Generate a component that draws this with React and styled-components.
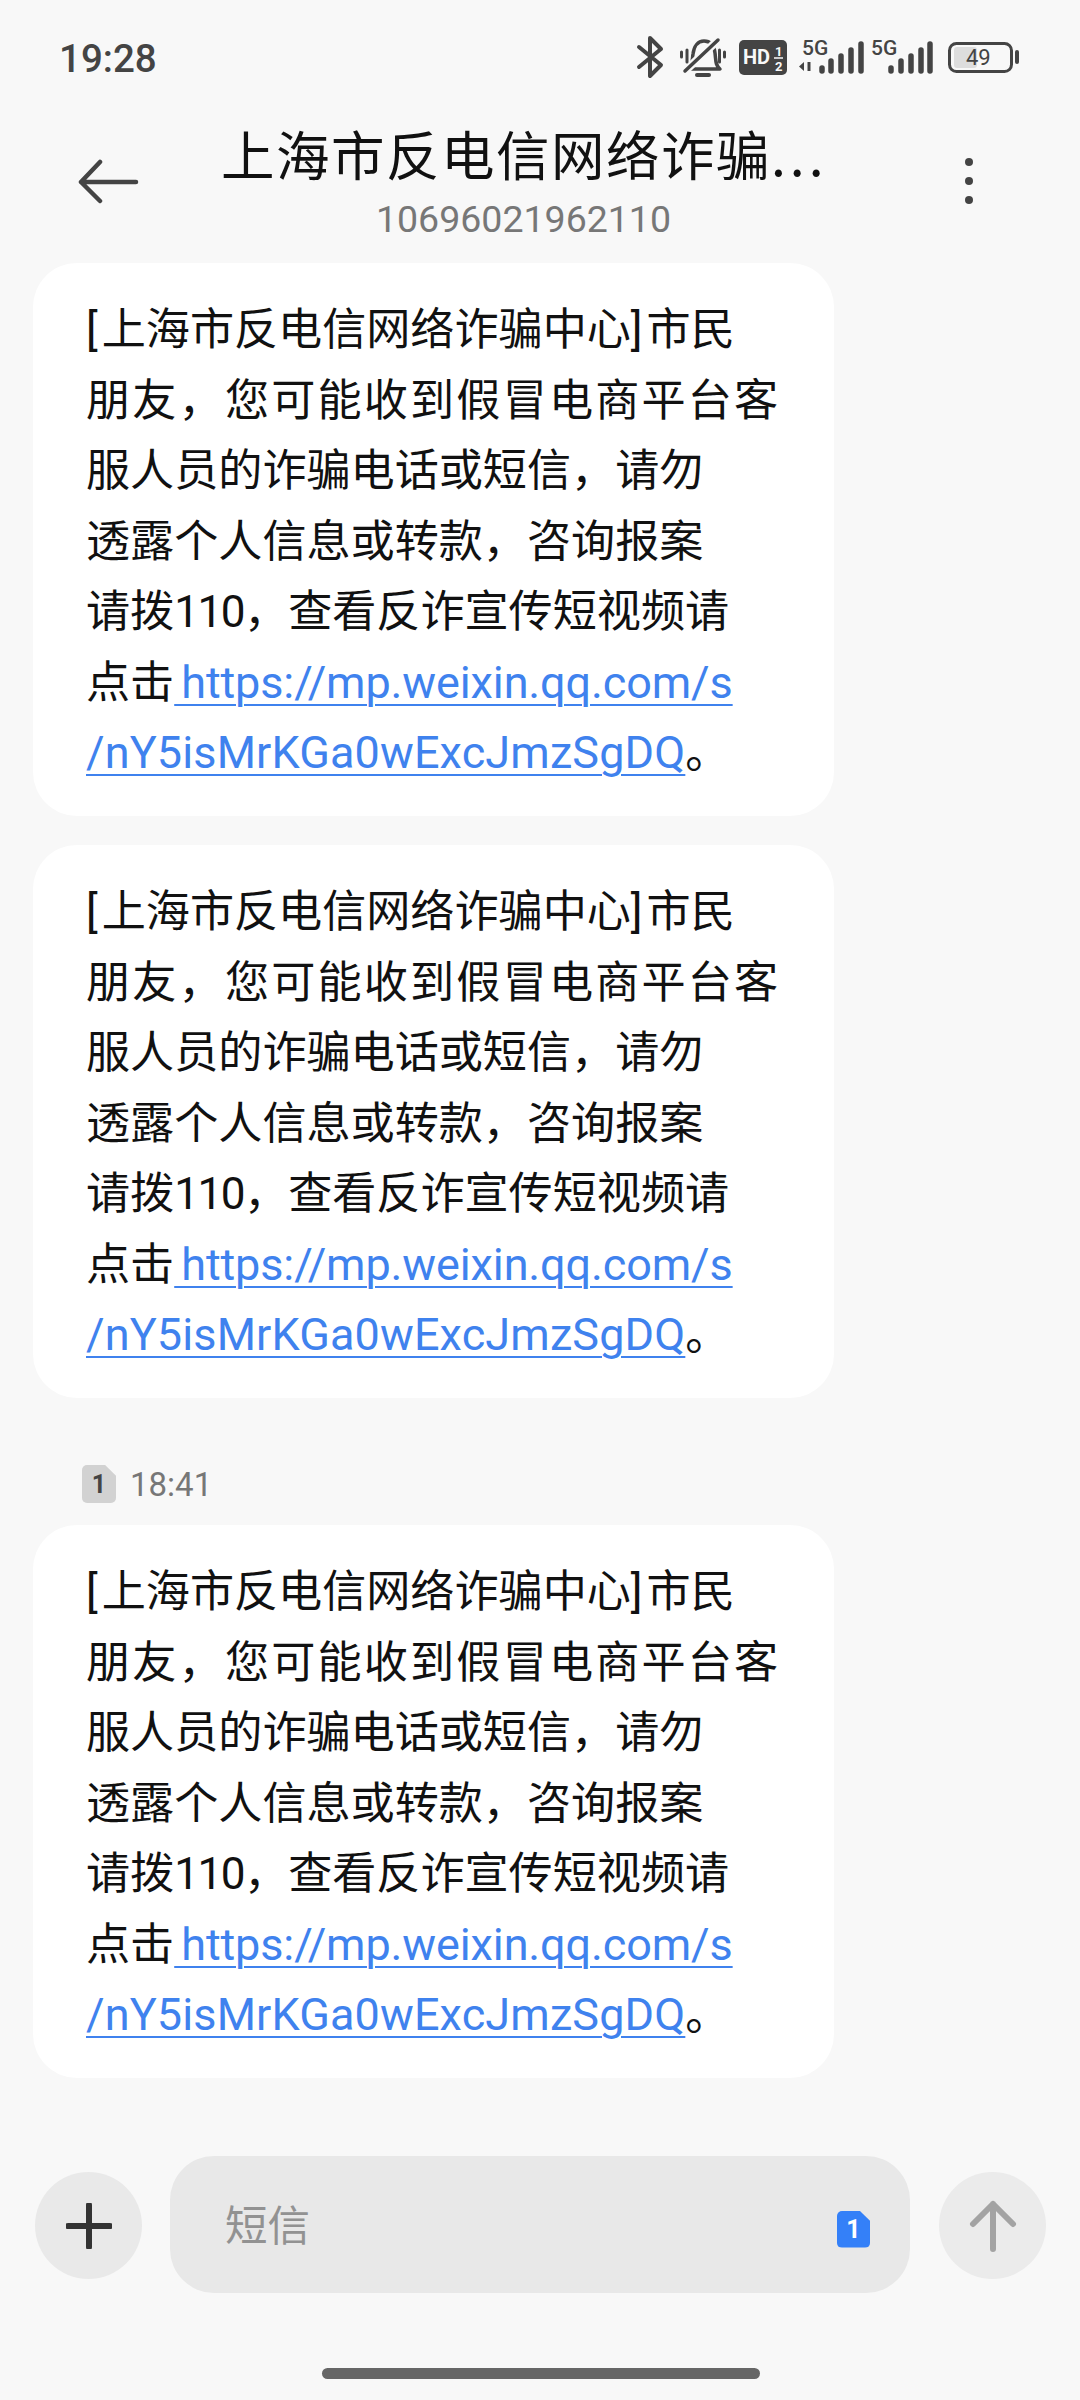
import React from 'react';
import styled, { createGlobalStyle } from 'styled-components';

const Global = createGlobalStyle`
  html, body {
    margin: 0;
    padding: 0;
    background: #f8f8f8;
  }
`;

const Page = styled.div`
  width: 1080px;
  height: 2400px;
  display: flex;
  flex-direction: column;
  overflow: hidden;
  background: #f8f8f8;
  font-family: Roboto, "Noto Sans CJK SC", sans-serif;
`;

const StatusBar = styled.div`
  height: 116px;
  flex: none;
  display: flex;
  align-items: center;
  justify-content: space-between;
  box-sizing: border-box;
  padding: 0 55px 0 59px;
`;

const Clock = styled.span`
  font-size: 38.5px;
  font-weight: 500;
  color: #444;
`;

const StatusIcons = styled.div`
  display: flex;
  align-items: center;
`;

const Header = styled.div`
  height: 131px;
  flex: none;
  display: flex;
  align-items: flex-start;
`;

const BackButton = styled.div`
  width: 221px;
  flex: none;
  padding: 43px 0 0 78px;
  box-sizing: border-box;
  line-height: 0;
`;

const Titles = styled.div`
  width: 697px;
  flex: none;
  display: flex;
  flex-direction: column;
`;

const Title = styled.div`
  font-family: "Noto Sans CJK SC", sans-serif;
  font-size: 53.5px;
  letter-spacing: 1.5px;
  line-height: 74px;
  color: #111;
  white-space: nowrap;
`;

const Ellipsis = styled.span`
  letter-spacing: 4px;
`;

const Subtitle = styled.div`
  width: 605px;
  text-align: center;
  font-size: 37.5px;
  line-height: 46px;
  margin-top: 6px;
  color: #777;
`;

const Dots = styled.div`
  display: flex;
  flex-direction: column;
  gap: 11px;
  padding: 42px 0 0 47px;
`;

const Dot = styled.span`
  width: 8px;
  height: 8px;
  border-radius: 50%;
  background: #444;
`;

const Messages = styled.div`
  flex: 1;
  display: flex;
  flex-direction: column;
  padding: 16px 0 0 33px;
`;

const Bubble = styled.div`
  width: 801px;
  height: 553px;
  box-sizing: border-box;
  padding: 32px 0 0 53px;
  margin-bottom: 29px;
  background: #fff;
  border-radius: 44px;
  font-family: Roboto, "Noto Sans CJK SC", sans-serif;
  font-size: 44.1px;
  line-height: 70.5px;
  color: #111;
  white-space: nowrap;
`;

const Line = styled.div`
  height: 70.5px;
  letter-spacing: ${p => p.$spread || 0}px;
`;

const Bracket = styled.span`
  letter-spacing: 4px;
`;

const Digits = styled.span`
  letter-spacing: -1.5px;
`;

const Url = styled.a`
  color: #3f82ee;
  font-size: 45px;
  letter-spacing: ${p => p.$track}px;
  word-spacing: -4px;
  text-decoration: underline;
  text-underline-offset: 6px;
  text-decoration-thickness: 2px;
`;

const DateRow = styled.div`
  display: flex;
  align-items: center;
  gap: 14px;
  padding-left: 49px;
  margin: 38px 0 22px;
  height: 38px;
`;

const DateText = styled.span`
  font-size: 33px;
  color: #777;
`;

const SimBadge = styled.span`
  width: ${p => p.$w}px;
  height: ${p => p.$h}px;
  display: flex;
  align-items: center;
  justify-content: center;
  border-radius: 5px;
  font-size: ${p => p.$size}px;
  font-weight: 700;
  color: ${p => p.$fg};
  background: ${p => p.$bg};
  clip-path: polygon(0 0, 68% 0, 100% 28%, 100% 100%, 0 100%);
`;

const InputBadge = styled(SimBadge)`
  margin-top: 9px;
`;

const Composer = styled.div`
  flex: none;
  height: 244px;
  display: flex;
  align-items: flex-start;
  padding-left: 35px;
  box-sizing: border-box;
  position: relative;
`;

const RoundButton = styled.div`
  width: 107px;
  height: 107px;
  flex: none;
  margin-top: 16px;
  border-radius: 50%;
  background: ${p => p.$bg};
  display: flex;
  align-items: center;
  justify-content: center;
`;

const InputBox = styled.div`
  width: 740px;
  height: 137px;
  flex: none;
  margin: 0 29px 0 28px;
  padding: 0 40px 0 55px;
  box-sizing: border-box;
  border-radius: 44px;
  background: #e8e8e8;
  display: flex;
  align-items: center;
  justify-content: space-between;
`;

const Placeholder = styled.span`
  font-family: "Noto Sans CJK SC", sans-serif;
  font-size: 42.5px;
  margin-bottom: 4px;
  color: #929292;
`;

const HomeBar = styled.div`
  position: absolute;
  left: 322px;
  bottom: 21px;
  width: 438px;
  height: 11px;
  border-radius: 6px;
  background: #666;
`;

const Message = () => (
  <Bubble>
    <Line><Bracket>[</Bracket>上海市反电信网络诈骗中心<Bracket>]</Bracket>市民</Line>
    <Line $spread={2.2}>朋友，您可能收到假冒电商平台客</Line>
    <Line>服人员的诈骗电话或短信，请勿</Line>
    <Line>透露个人信息或转款，咨询报案</Line>
    <Line>请拨<Digits>110</Digits>，查看反诈宣传短视频请</Line>
    <Line>点击<Url $track={-0.12}> https://mp.weixin.qq.com/s</Url></Line>
    <Line><Url $track={0.13}>/nY5isMrKGa0wExcJmzSgDQ</Url>。</Line>
  </Bubble>
);

const StatusGlyphs = () => (
  <svg width="395" height="60" viewBox="0 0 395 60" fill="none">
    {/* bluetooth */}
    <path d="M9 19 L31 37 L20 48 V10 L31 21 L9 39" stroke="#444" strokeWidth="4" strokeLinecap="round" strokeLinejoin="round" />
    {/* muted bell */}
    <path d="M58 41 C63 37 62 32 63 26 C64 18 68 13 74 13 C80 13 84 17 85 25 C86 32 85 37 90 41 Z" stroke="#444" strokeWidth="3.5" strokeLinejoin="round" />
    <path d="M67 47 H79" stroke="#444" strokeWidth="4" strokeLinecap="round" />
    <path d="M55 43 L88 12" stroke="#f8f8f8" strokeWidth="8" />
    <path d="M55 43 L88 12" stroke="#444" strokeWidth="3.5" strokeLinecap="round" />
    <path d="M51.5 24 V29 M57 22 V34 M89.5 22 V34 M94.5 24 V29" stroke="#444" strokeWidth="3" strokeLinecap="round" />
    {/* HD badge */}
    <rect x="109" y="12" width="48" height="35" rx="5" fill="#444" />
    <text x="113" y="36" fontFamily="Roboto" fontWeight="700" fontSize="20" fill="#f8f8f8">HD</text>
    <text x="145" y="28" fontFamily="Roboto" fontWeight="700" fontSize="13" fill="#f8f8f8">1</text>
    <path d="M144 30 H153" stroke="#f8f8f8" strokeWidth="1.5" />
    <text x="145" y="43" fontFamily="Roboto" fontWeight="700" fontSize="13" fill="#f8f8f8">2</text>
    {/* sim 1 */}
    <text x="172" y="27" fontFamily="Roboto" fontWeight="500" fontSize="21" fill="#444">5G</text>
    <path d="M169 38.5 L174 34 V43 Z" fill="#444" />
    <path d="M179 34 V43" stroke="#444" strokeWidth="3" />
    <path d="M192 40 V43 M201 33 V43 M211 28 V43 M221 22 V43 M231 16 V43" stroke="#444" strokeWidth="5.5" strokeLinecap="round" />
    {/* sim 2 */}
    <text x="241" y="27" fontFamily="Roboto" fontWeight="500" fontSize="21" fill="#444">5G</text>
    <path d="M261 40 V43 M271 33 V43 M281 28 V43 M291 22 V43 M300 16 V43" stroke="#444" strokeWidth="5.5" strokeLinecap="round" />
    {/* battery */}
    <rect x="319.5" y="15.5" width="62" height="28" rx="7" stroke="#444" strokeWidth="3" />
    <rect x="324" y="19" width="23" height="21" rx="3" fill="#ddd" />
    <text x="336" y="37" fontFamily="Roboto" fontSize="22" fill="#444">49</text>
    <path d="M387 24 V34" stroke="#444" strokeWidth="4" strokeLinecap="round" />
  </svg>
);

const App = () => (
  <Page>
    <Global />
    <StatusBar>
      <Clock>19:28</Clock>
      <StatusIcons><StatusGlyphs /></StatusIcons>
    </StatusBar>
    <Header>
      <BackButton>
        <svg width="62" height="48" viewBox="0 0 62 48" fill="none">
          <path d="M58 23 H3 M22 3 L3 23 L22 42" stroke="#444" strokeWidth="4.5" strokeLinecap="round" strokeLinejoin="round" />
        </svg>
      </BackButton>
      <Titles>
        <Title>上海市反电信网络诈骗<Ellipsis>...</Ellipsis></Title>
        <Subtitle>10696021962110</Subtitle>
      </Titles>
      <Dots><Dot /><Dot /><Dot /></Dots>
    </Header>
    <Messages>
      <Message />
      <Message />
      <DateRow>
        <SimBadge $w={34} $h={38} $size={25} $fg="#444" $bg="#d2d2d2">1</SimBadge>
        <DateText>18:41</DateText>
      </DateRow>
      <Message />
    </Messages>
    <Composer>
      <RoundButton $bg="#e9e9e9">
        <svg width="46" height="46" viewBox="0 0 46 46" fill="none">
          <path d="M23 2 V44 M2 23 H44" stroke="#333" strokeWidth="6" strokeLinecap="round" />
        </svg>
      </RoundButton>
      <InputBox>
        <Placeholder>短信</Placeholder>
        <InputBadge $w={33} $h={37} $size={25} $fg="#fff" $bg="#3480f8">1</InputBadge>
      </InputBox>
      <RoundButton $bg="#ebebeb">
        <svg width="48" height="54" viewBox="0 0 48 54" fill="none">
          <path d="M24 50 V5 M4 25 L24 5 L44 25" stroke="#a3a3a3" strokeWidth="6" strokeLinecap="round" strokeLinejoin="round" />
        </svg>
      </RoundButton>
      <HomeBar />
    </Composer>
  </Page>
);

export default App;
